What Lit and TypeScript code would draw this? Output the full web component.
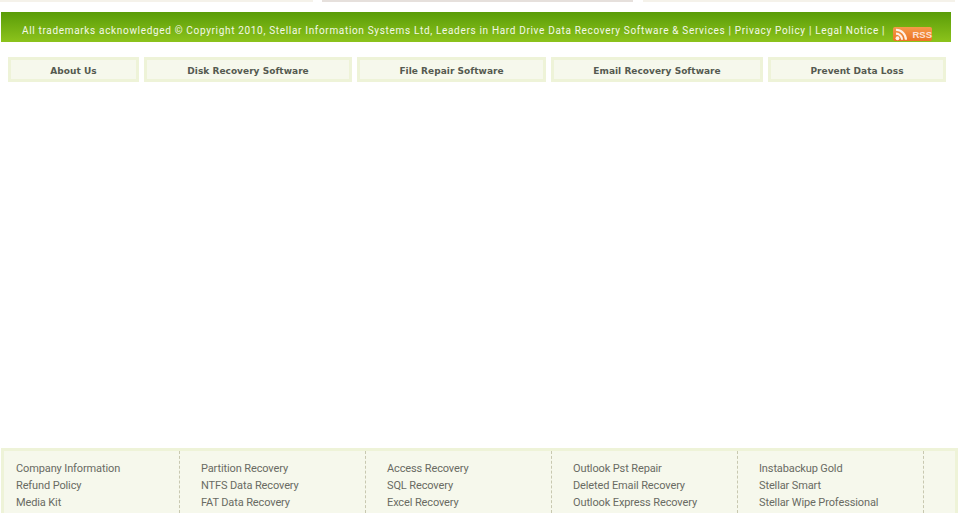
import { LitElement, html, css } from "lit";
import { customElement } from "lit/decorators.js";

const NAV: [string, number][] = [
  ["About Us", 131],
  ["Disk Recovery Software", 208],
  ["File Repair Software", 189],
  ["Email Recovery Software", 212],
  ["Prevent Data Loss", 178],
];
const COLS = [
  ["Company Information", "Refund Policy", "Media Kit"],
  ["Partition Recovery", "NTFS Data Recovery", "FAT Data Recovery"],
  ["Access Recovery", "SQL Recovery", "Excel Recovery"],
  ["Outlook Pst Repair", "Deleted Email Recovery", "Outlook Express Recovery"],
  ["Instabackup Gold", "Stellar Smart", "Stellar Wipe Professional"],
];

@customElement("app-root")
export class AppRoot extends LitElement {
  static styles = css`
    :host {
      display: block;
      width: 961px;
      height: 513px;
      overflow: hidden;
      background: #fff;
      font-family: "Roboto", sans-serif;
    }
    .page { display: flex; flex-direction: column; height: 513px; }
    .strips { display: flex; height: 2px; margin-bottom: 10px; }
    .strip { height: 2px; background: #f5f2ea; }
    .s1 { width: 313px; }
    .s2 { width: 311px; margin-left: 9px; background: #e6e0dc; }
    .s3 { width: 312px; margin-left: 10px; }
    .bar {
      width: 950px;
      margin-left: 1px;
      height: 30px;
      box-sizing: border-box;
      background: linear-gradient(#5a9c08, #8cc31c);
      color: #f4f8e8;
      font-size: 10px;
      letter-spacing: 0.67px;
      display: flex;
      align-items: center;
      padding: 6px 0 0 21px;
      white-space: nowrap;
      position: relative;
    }
    .rss {
      position: absolute;
      left: 892px;
      top: 15px;
      width: 39px;
      height: 14px;
      background: linear-gradient(#f59a4a, #ec7424);
      border-radius: 2px;
      display: flex;
      align-items: center;
      gap: 5px;
      box-sizing: border-box;
      padding-left: 2px;
      letter-spacing: 0;
    }
    .rss span {
      font-family: "Liberation Sans", sans-serif;
      font-weight: 700;
      font-size: 9.5px;
      color: #fde2d4;
    }
    .rss svg { width: 13px; height: 13px; display: block; }
    nav {
      display: flex;
      gap: 5px;
      margin: 15px 0 0 8px;
    }
    .tab {
      height: 25px;
      box-sizing: border-box;
      padding-top: 2px;
      background: #f6f8ec;
      border: 3px solid #eef3d8;
      color: #555a50;
      font-family: "DejaVu Sans", sans-serif;
      font-size: 9px;
      letter-spacing: 0.03px;
      font-weight: bold;
      display: flex;
      align-items: center;
      justify-content: center;
      white-space: nowrap;
    }
    .spacer { flex: 1; }
    footer {
      margin-left: 1px;
      width: 957px;
      height: 65px;
      box-sizing: border-box;
      background: #f6f8ec;
      border: solid #eef3d8;
      border-width: 3px 3px 0 3px;
      display: flex;
    }
    .col {
      width: 186px;
      box-sizing: border-box;
      padding: 9px 0 0 21px;
      border-right: 1px dashed #c8c8b0;
      color: #696b63;
      font-size: 11px;
      letter-spacing: -0.12px;
      line-height: 17px;
      white-space: nowrap;
    }
    .col:first-child { width: 176px; padding-left: 12px; }
  `;

  render() {
    return html`<div class="page">
      <div class="strips">
        <div class="strip s1"></div><div class="strip s2"></div><div class="strip s3"></div>
      </div>
      <div class="bar">
        All trademarks acknowledged © Copyright 2010, Stellar Information Systems Ltd, Leaders in Hard Drive Data Recovery Software &amp; Services | Privacy Policy | Legal Notice |
        <div class="rss">
          <svg viewBox="0 0 13 13"><circle cx="2.6" cy="10.4" r="2" fill="#fff0e4"/><path d="M1 5.6a6.4 6.4 0 0 1 6.4 6.4M1 1.6A10.4 10.4 0 0 1 11.4 12" fill="none" stroke="#fff0e4" stroke-width="2.2"/></svg>
          <span>RSS</span>
        </div>
      </div>
      <nav>
        ${NAV.map(([t, w]) => html`<div class="tab" style="width:${w}px">${t}</div>`)}
      </nav>
      <div class="spacer"></div>
      <footer>
        ${COLS.map((c) => html`<div class="col">${c.map((t) => html`<div>${t}</div>`)}</div>`)}
      </footer>
    </div>`;
  }
}
